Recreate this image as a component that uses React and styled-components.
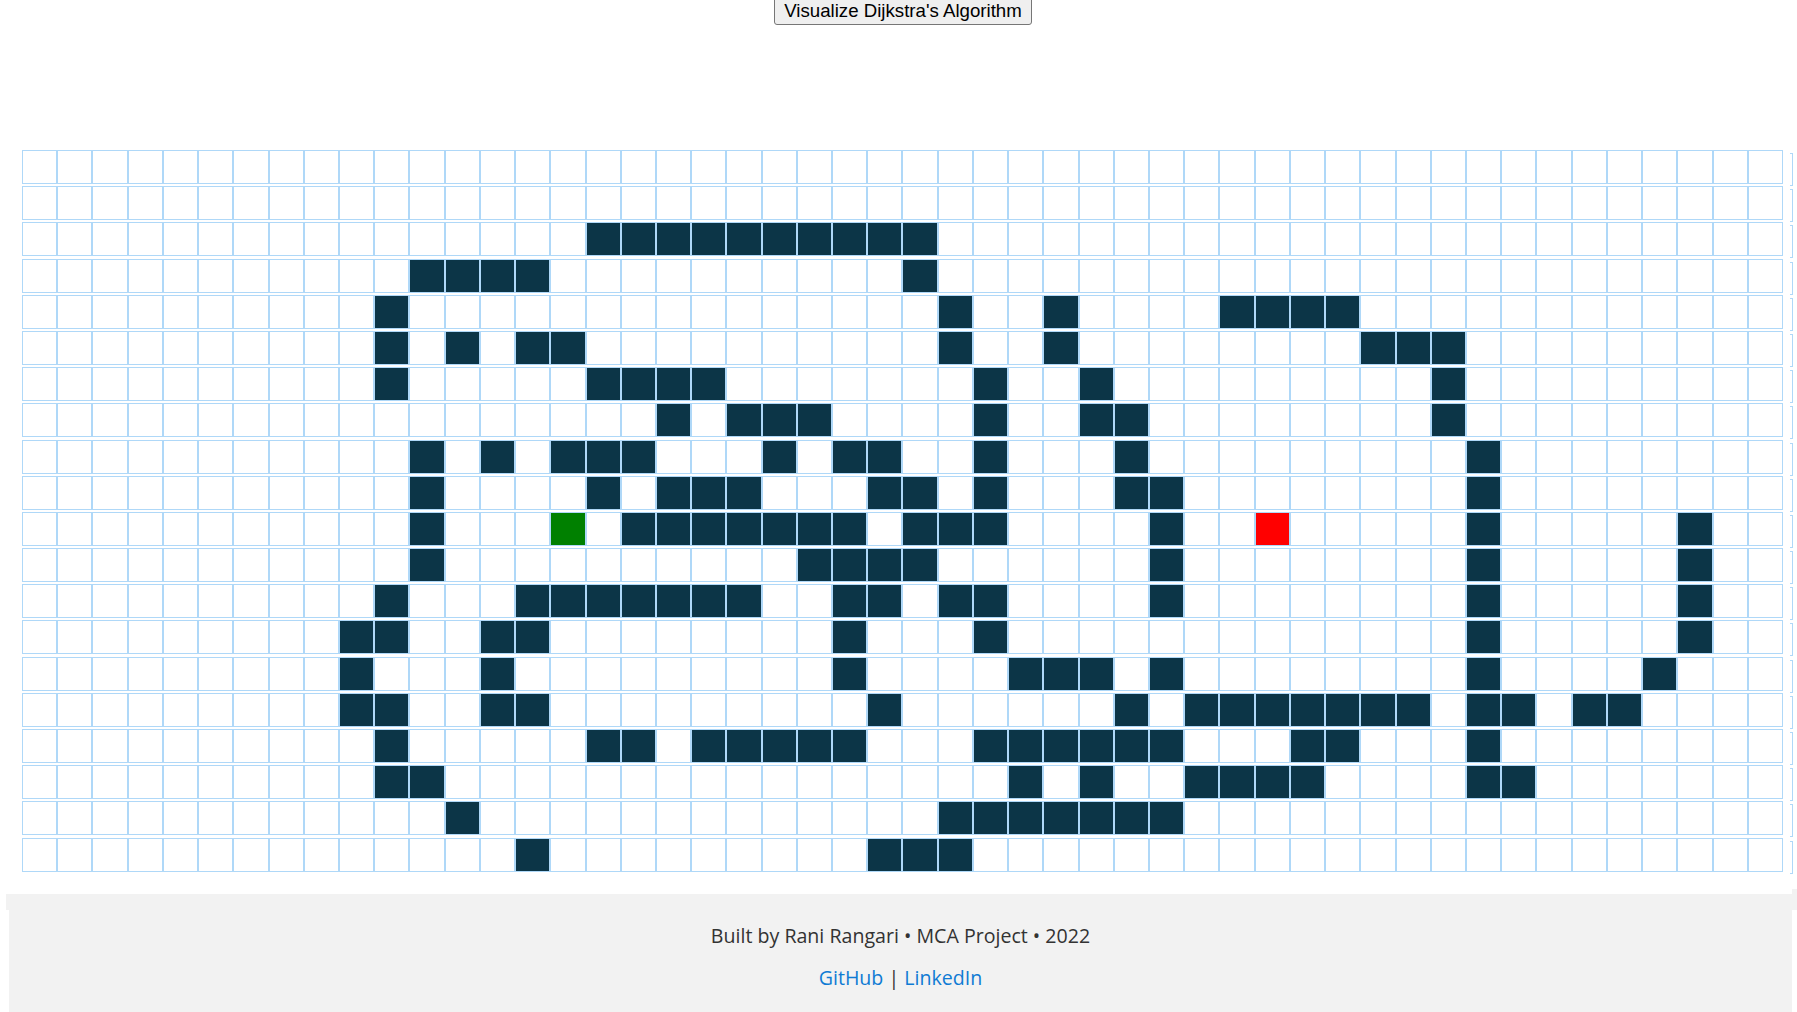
import React from "react";
import styled, { createGlobalStyle } from "styled-components";

const GlobalStyle = createGlobalStyle`
  html, body {
    margin: 0;
    padding: 0;
    background: #ffffff;
    overflow: hidden;
  }
`;

const ROWS = 20;
const COLS = 50;
const START = { row: 10, col: 15 };
const FINISH = { row: 10, col: 35 };

// wall columns per row, written as single columns or ranges
const WALLS = [
  "",
  "",
  "16-25",
  "11-14 25",
  "10 26 29 34-37",
  "10 12 14-15 26 29 38-40",
  "10 16-19 27 30 40",
  "18 20-22 27 30-31 40",
  "11 13 15-17 21 23-24 27 31 41",
  "11 16 18-20 24-25 27 31-32 41",
  "11 17-23 25-27 32 41 47",
  "11 22-25 32 41 47",
  "10 14-20 23-24 26-27 32 41 47",
  "9-10 13-14 23 27 41 47",
  "9 13 23 28-30 32 41 46",
  "9-10 13-14 24 31 33-39 41-42 44-45",
  "10 16-17 19-23 27-32 36-37 41",
  "10-11 28 30 33-36 41-42",
  "12 26-32",
  "14 24-26",
];

const parseWalls = (spec) => {
  const set = new Set();
  spec
    .split(" ")
    .filter(Boolean)
    .forEach((part) => {
      const [a, b] = part.split("-").map(Number);
      for (let c = a; c <= (b ?? a); c++) set.add(c);
    });
  return set;
};

const buildGrid = () =>
  WALLS.slice(0, ROWS).map((spec, row) => {
    const walls = parseWalls(spec);
    return Array.from({ length: COLS }, (_, col) => {
      if (row === START.row && col === START.col) return "start";
      if (row === FINISH.row && col === FINISH.col) return "finish";
      return walls.has(col) ? "wall" : "empty";
    });
  });

const Page = styled.div`
  height: 1012px;
  display: flex;
  flex-direction: column;
`;

const ButtonBar = styled.div`
  display: flex;
  justify-content: center;
  padding-left: 9px;
  margin-top: -3px;
`;

const VisualizeButton = styled.button`
  font-family: Arial, "Liberation Sans", sans-serif;
  font-size: 18.67px;
  line-height: 21px;
  color: #000;
  background: #efefef;
  border: 1px solid #767676;
  border-radius: 3px;
  padding: 2px 9px 3px;
  cursor: pointer;
`;

const Grid = styled.div`
  margin: 125px 0 0 22px;
  width: 1761px;
  display: flex;
  flex-direction: column;
  gap: 2.2px;
`;

const Row = styled.div`
  position: relative;
  display: flex;
  height: 34px;

  &::after {
    content: "";
    position: absolute;
    left: 1768px;
    top: 3px;
    width: 2px;
    height: 31px;
    border: 1px solid rgb(175, 216, 248);
    border-left: none;
  }
`;

const NODE_COLORS = {
  empty: "#ffffff",
  wall: "rgb(12, 53, 71)",
  start: "rgb(0, 128, 0)",
  finish: "rgb(255, 0, 0)",
};

const Node = styled.div`
  flex: 1 1 0;
  box-sizing: border-box;
  height: 34px;
  border: 1px solid rgb(175, 216, 248);
  background: ${({ $kind }) => NODE_COLORS[$kind]};
`;

const Footer = styled.footer`
  position: relative;
  flex: 1;
  margin: 22px 5px 0 9px;
  padding-top: 29px;
  background: #f2f2f2;
  text-align: center;
  font-family: "Open Sans", "Noto Sans", sans-serif;
  font-size: 19.6px;
  line-height: 26px;
  color: #333333;

  &::before {
    content: "";
    position: absolute;
    left: -3px;
    right: 0;
    top: 0;
    height: 16px;
    background: #f2f2f2;
  }

  &::after {
    content: "";
    position: absolute;
    right: -5px;
    top: -5px;
    width: 5px;
    height: 21px;
    background: #f2f2f2;
  }
`;

const FooterLine = styled.p`
  position: relative;
  z-index: 1;
  margin: 0 0 16px;
`;

const FooterLink = styled.a`
  color: #0f7bd4;
  text-decoration: none;
`;

export default function App() {
  const grid = buildGrid();
  return (
    <>
      <GlobalStyle />
      <Page>
        <ButtonBar>
          <VisualizeButton>Visualize Dijkstra's Algorithm</VisualizeButton>
        </ButtonBar>
        <Grid>
          {grid.map((row, r) => (
            <Row key={r}>
              {row.map((kind, c) => (
                <Node key={c} $kind={kind} />
              ))}
            </Row>
          ))}
        </Grid>
        <Footer>
          <FooterLine>Built by Rani Rangari • MCA Project • 2022</FooterLine>
          <FooterLine>
            <FooterLink href="#">GitHub</FooterLink> |{" "}
            <FooterLink href="#">LinkedIn</FooterLink>
          </FooterLine>
        </Footer>
      </Page>
    </>
  );
}
